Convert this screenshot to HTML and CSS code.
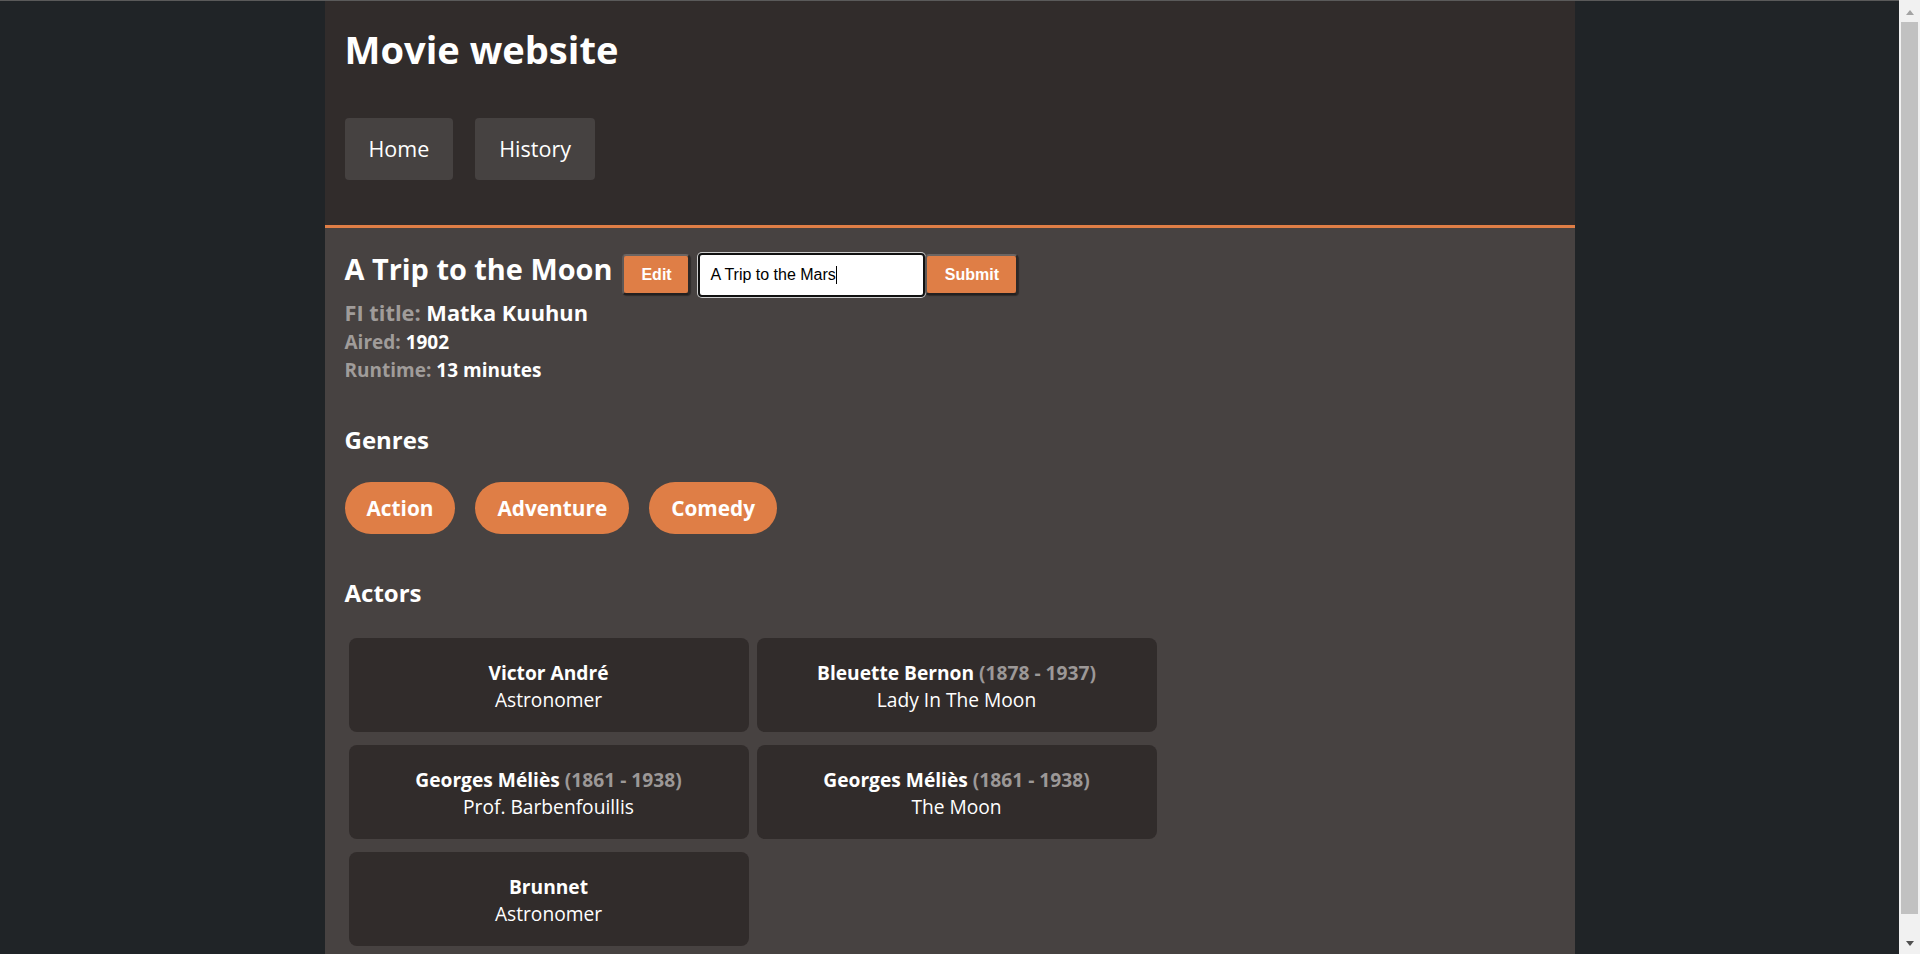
FILE: index.html
```html
<!DOCTYPE html>
<html lang="en">
<head>
<meta charset="utf-8">
<title>Movie website</title>
<link rel="stylesheet" href="styles.css">
</head>
<body>
<div class="page">
  <header class="site-header">
    <h1 class="site-title">Movie website</h1>
    <nav class="site-nav">
      <a class="nav-link" href="#">Home</a>
      <a class="nav-link" href="#">History</a>
    </nav>
  </header>
  <main class="content">
    <div class="title-row">
      <h2 class="movie-title">A Trip to the Moon</h2>
      <button class="btn btn-edit" type="button">Edit</button>
      <div class="title-input"><span class="input-text">A Trip to the Mars</span><span class="caret"></span></div>
      <button class="btn btn-submit" type="button">Submit</button>
    </div>
    <p class="meta meta-fi"><span class="meta-label">FI title:</span> Matka Kuuhun</p>
    <p class="meta"><span class="meta-label">Aired:</span> 1902</p>
    <p class="meta"><span class="meta-label">Runtime:</span> 13 minutes</p>

    <h3 class="section-title">Genres</h3>
    <div class="genres">
      <span class="genre">Action</span>
      <span class="genre">Adventure</span>
      <span class="genre">Comedy</span>
    </div>

    <h3 class="section-title section-actors">Actors</h3>
    <div class="actors">
      <div class="actor-card">
        <div class="actor-name">Victor André</div>
        <div class="actor-role">Astronomer</div>
      </div>
      <div class="actor-card">
        <div class="actor-name">Bleuette Bernon <span class="actor-years">(1878 - 1937)</span></div>
        <div class="actor-role">Lady In The Moon</div>
      </div>
      <div class="actor-card">
        <div class="actor-name">Georges Méliès <span class="actor-years">(1861 - 1938)</span></div>
        <div class="actor-role">Prof. Barbenfouillis</div>
      </div>
      <div class="actor-card">
        <div class="actor-name">Georges Méliès <span class="actor-years">(1861 - 1938)</span></div>
        <div class="actor-role">The Moon</div>
      </div>
      <div class="actor-card">
        <div class="actor-name">Brunnet</div>
        <div class="actor-role">Astronomer</div>
      </div>
    </div>
  </main>
</div>
<div class="scrollbar" aria-hidden="true">
  <span class="sb-arrow sb-up"></span>
  <span class="sb-thumb"></span>
  <span class="sb-arrow sb-down"></span>
</div>
</body>
</html>
```
FILE: styles.css
```css
html {
  background: #202427;
}

body {
  margin: 0;
  padding-right: 21px;
  border-top: 1px solid #5a5a5a;
  background: #202427;
  font-family: "Open Sans", "Noto Sans", sans-serif;
  color: #ffffff;
}

.page {
  width: 1250px;
  margin: 0 auto;
}

/* header */
.site-header {
  background: #312c2b;
  padding: 25.6px 20px 45px;
  border-bottom: 3px solid #df7e46;
}

.site-title {
  margin: 0;
  font-size: 38.1px;
  line-height: 45.7px;
  font-weight: 700;
}

.site-nav {
  display: flex;
  gap: 22px;
  margin-top: 45.7px;
}

.nav-link {
  display: block;
  background: #464241;
  color: #ffffff;
  text-decoration: none;
  font-size: 21.5px;
  font-weight: 500;
  line-height: 30px;
  padding: 16px 24px;
  border-radius: 4px;
}

/* content */
.content {
  background: #474241;
  padding: 24px 20px 27px;
}

.title-row {
  display: flex;
  align-items: baseline;
}

.movie-title {
  margin: 0 10px 0 0;
  font-size: 28.9px;
  line-height: 34px;
  font-weight: 700;
}

.btn {
  font-family: "Liberation Sans", Arial, sans-serif;
  font-size: 16px;
  font-weight: 700;
  line-height: 20px;
  color: #ffffff;
  background: #df7e46;
  padding: 8.5px 17px;
  border: 2px solid;
  border-color: #6b6563 #2c2928 #232020 #5d5857;
  border-radius: 4px;
  box-shadow: 1px 1px 1px rgba(0, 0, 0, 0.35);
}

.btn-edit {
  width: 68px;
  margin-right: 8px;
}

.btn-submit {
  width: 93px;
}

.title-input {
  box-sizing: border-box;
  width: 227px;
  height: 44px;
  background: #ffffff;
  color: #000000;
  font-family: "Liberation Sans", Arial, sans-serif;
  font-size: 16px;
  line-height: 20px;
  padding: 9.5px 10px 10.5px;
  border: 2px solid #111111;
  border-radius: 4px;
  box-shadow: 0 0 0 1px #cfcfcf;
  white-space: nowrap;
}

.caret {
  display: inline-block;
  width: 1px;
  height: 18px;
  background: #000000;
  vertical-align: -4px;
}

.meta {
  margin: 1px 0 0;
  font-size: 19px;
  line-height: 27px;
  font-weight: 700;
}

.meta-fi {
  font-size: 21.8px;
  line-height: 30px;
  margin-top: 1px;
}

.meta-label {
  color: #a09c9a;
}

.section-title {
  margin: 40.2px 0 0;
  font-size: 24px;
  line-height: 30px;
  font-weight: 700;
}

.genres {
  display: flex;
  gap: 20px;
  margin-top: 27.5px;
}

.genre {
  background: #df7e46;
  color: #ffffff;
  font-size: 20.8px;
  line-height: 28px;
  font-weight: 700;
  padding: 12px 22px;
  border-radius: 26px;
}

.section-actors {
  margin-top: 43.6px;
}

.actors {
  display: grid;
  grid-template-columns: repeat(2, 400px);
  column-gap: 8px;
  row-gap: 13px;
  padding: 0 4px;
  margin-top: 30px;
}

.actor-card {
  background: #312c2b;
  border-radius: 8px;
  text-align: center;
  font-size: 19.2px;
  line-height: 27px;
  padding: 21px 0 19px;
}

.actor-name {
  font-weight: 700;
}

.actor-years {
  color: #9c9897;
}

.actor-role {
  font-weight: 400;
}

/* browser scrollbar as seen in the capture */
.scrollbar {
  position: fixed;
  top: 0;
  right: 0;
  width: 21px;
  height: 100vh;
  background: #f1f1f1;
  display: flex;
  flex-direction: column;
  align-items: center;
}

.sb-arrow {
  width: 0;
  height: 0;
  border-left: 4.5px solid transparent;
  border-right: 4.5px solid transparent;
}

.sb-up {
  margin-top: 10px;
  border-bottom: 5px solid #a3a3a3;
}

.sb-thumb {
  width: 17px;
  height: 892px;
  margin-top: 7px;
  background: #c1c1c1;
}

.sb-down {
  margin-top: 27px;
  border-top: 5px solid #505050;
}
```
